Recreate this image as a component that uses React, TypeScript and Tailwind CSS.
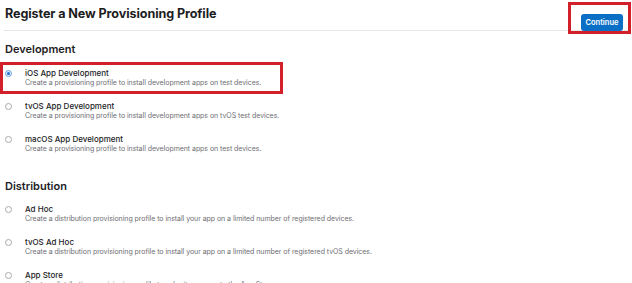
const development = [
  {
    title: 'iOS App Development',
    desc: 'Create a provisioning profile to install development apps on test devices.',
    selected: true,
  },
  {
    title: 'tvOS App Development',
    desc: 'Create a provisioning profile to install development apps on tvOS test devices.',
  },
  {
    title: 'macOS App Development',
    desc: 'Create a provisioning profile to install development apps on test devices.',
  },
]

const distribution = [
  {
    title: 'Ad Hoc',
    desc: 'Create a distribution provisioning profile to install your app on a limited number of registered devices.',
  },
  {
    title: 'tvOS Ad Hoc',
    desc: 'Create a distribution provisioning profile to install your app on a limited number of registered tvOS devices.',
  },
  {
    title: 'App Store',
    desc: 'Create a distribution provisioning profile to submit your app to the App Store.',
  },
]

type Option = { title: string; desc: string; selected?: boolean }

function Radio({ checked }: { checked?: boolean }) {
  return (
    <span
      className={
        checked
          ? 'mt-[2px] flex h-[7px] w-[7px] shrink-0 items-center justify-center rounded-full border border-[#6fa6e0] bg-[#dbe9f8]'
          : 'mt-[2px] h-[7px] w-[7px] shrink-0 rounded-full border border-[#a9a9ae] bg-white'
      }
    >
      {checked && <span className="h-[3px] w-[3px] rounded-full bg-[#1f6fd1]" />}
    </span>
  )
}

function OptionRow({ option }: { option: Option }) {
  return (
    <div
      className={
        option.selected
          ? 'ml-[3px] flex h-[26px] w-[277px] pt-[3px] pl-[2px] outline-[3px] outline-solid outline-[#d2202b]'
          : 'ml-[3px] flex h-[26px] pt-[3px] pl-[2px]'
      }
    >
      <Radio checked={option.selected} />
      <div className="ml-[13px]">
        <div className="text-[8px] leading-[10px] font-medium text-[#1d1d1f]">{option.title}</div>
        <div className="text-[7px] leading-[10px] tracking-[-0.05px] text-[#6e6e73]">{option.desc}</div>
      </div>
    </div>
  )
}

export default function App() {
  return (
    <div className="h-[283px] w-[632px] overflow-hidden bg-white font-['Inter',sans-serif] text-[#1d1d1f]">
      <div className="mx-[4px] flex h-[31px] items-start justify-between border-b border-[#e6e6e6] pl-[1px]">
        <h1 className="mt-[6px] text-[12.6px] leading-[16px] font-bold tracking-[-0.1px]">
          Register a New Provisioning Profile
        </h1>
        <div className="mt-[2px] -mr-[3px] border-[3px] border-[#d2202b] pt-[2px] pr-[5px] pb-[0px] pl-[10px]">
          <button
            type="button"
            className="h-[17px] w-[42px] rounded-[3px] bg-[#0b6fc6] text-[7.5px] font-semibold text-white"
          >
            Continue
          </button>
        </div>
      </div>

      <section className="pt-[11px]">
        <h2 className="pl-[5px] text-[11px] leading-[14px] font-semibold">Development</h2>
        <div className="mt-[9px] flex flex-col gap-[7px]">
          {development.map((o) => (
            <OptionRow key={o.title} option={o} />
          ))}
        </div>
      </section>

      <section className="pt-[22px]">
        <h2 className="pl-[5px] text-[11px] leading-[14px] font-semibold">Distribution</h2>
        <div className="mt-[8px] flex flex-col gap-[7px]">
          {distribution.map((o) => (
            <OptionRow key={o.title} option={o} />
          ))}
        </div>
      </section>
    </div>
  )
}
